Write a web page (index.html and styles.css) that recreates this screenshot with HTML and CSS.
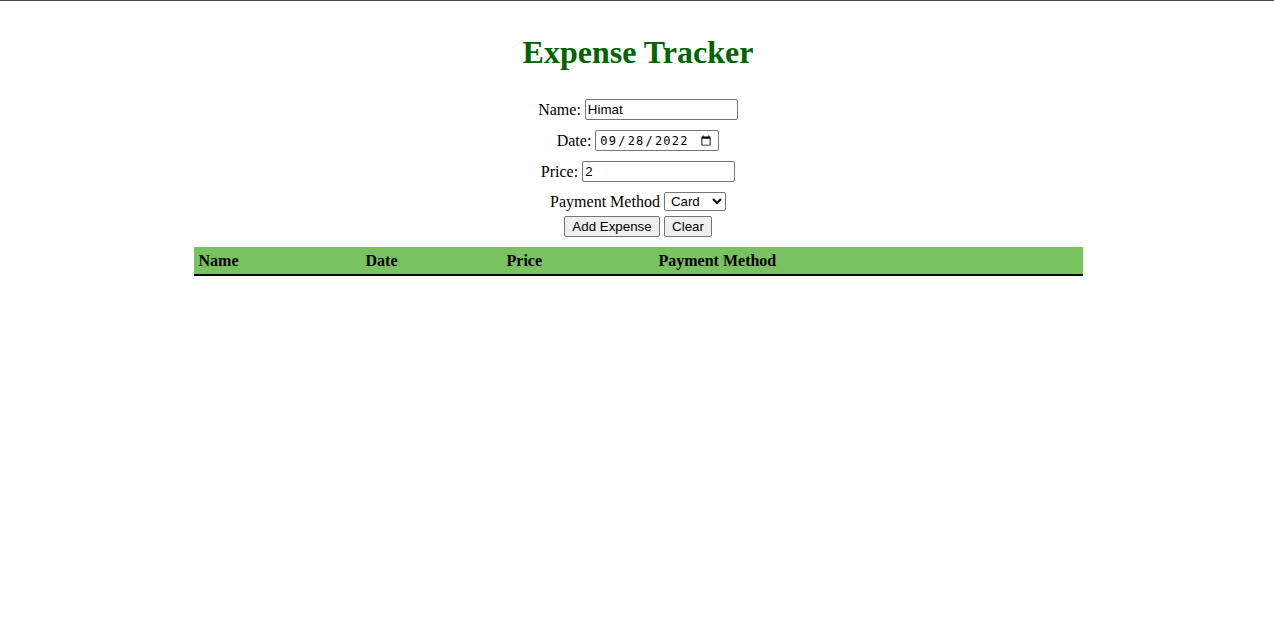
FILE: index.html
```html
<!DOCTYPE html>
<html lang="en">
<head>
<meta charset="utf-8">
<title>Expense Tracker</title>
<link rel="stylesheet" href="styles.css">
</head>
<body>
<div class="page">
  <h1 class="title">Expense Tracker</h1>
  <form class="form">
    <div class="row row-name">
      <label class="label" for="name">Name:</label>
      <input class="field field-name" id="name" type="text" value="Himat">
    </div>
    <div class="row row-date">
      <label class="label" for="date">Date:</label>
      <input class="field field-date" id="date" type="date" value="2022-09-28">
    </div>
    <div class="row row-price">
      <label class="label" for="price">Price:</label>
      <input class="field field-price" id="price" type="text" value="2">
    </div>
    <div class="row row-method">
      <label class="label" for="method">Payment Method</label>
      <select class="select" id="method">
        <option>Card</option>
        <option>Cash</option>
        <option>Other</option>
      </select>
    </div>
    <div class="row row-buttons">
      <button class="btn btn-add" type="button">Add Expense</button>
      <button class="btn btn-clear" type="button">Clear</button>
    </div>
  </form>
  <table class="table">
    <thead>
      <tr>
        <th class="col-name">Name</th>
        <th class="col-date">Date</th>
        <th class="col-price">Price</th>
        <th class="col-method">Payment Method</th>
      </tr>
    </thead>
    <tbody></tbody>
  </table>
</div>
</body>
</html>
```

FILE: styles.css
```css
html, body {
  margin: 0;
  padding: 0;
  background: #ffffff;
}

body {
  font-family: "Liberation Serif", "Times New Roman", serif;
  font-size: 16px;
  color: #000000;
}

.page {
  border-top: 1px solid #4a4a4a;
  min-height: 621px;
  padding-left: 2px;
  display: flex;
  flex-direction: column;
  align-items: center;
}

.title {
  margin: 33px 0 0 0;
  font-size: 32px;
  line-height: 37px;
  font-weight: bold;
  color: #006400;
  text-align: center;
}

.form {
  margin-top: 28px;
  display: flex;
  flex-direction: column;
  align-items: center;
}

.row {
  display: flex;
  justify-content: center;
  align-items: center;
  gap: 4px;
  height: 21px;
}

.row-date,
.row-price {
  margin-top: 10px;
}

.row-method {
  margin-top: 10px;
  height: 19px;
}

.row-buttons {
  margin-top: 5px;
}

.label {
  line-height: 18px;
}

.field {
  box-sizing: border-box;
  height: 21px;
  margin: 0;
  padding: 1px 2px;
  border: 1px solid #767676;
  border-radius: 2px;
  font-family: "Liberation Sans", Arial, sans-serif;
  font-size: 13.33px;
  color: #000000;
  background: #ffffff;
}

.field-name,
.field-price {
  width: 153px;
}

.field-date {
  width: 124px;
  font-family: "DejaVu Sans Mono", "Liberation Mono", monospace;
  font-size: 12px;
  letter-spacing: 1.2px;
  padding: 1px 4px 1px 3px;
}

.field-date::-webkit-datetime-edit-month-field,
.field-date::-webkit-datetime-edit-day-field,
.field-date::-webkit-datetime-edit-year-field {
  background: transparent;
  color: #000000;
}

.select {
  box-sizing: border-box;
  width: 62px;
  height: 19px;
  margin: 0;
  padding: 0 0 0 2px;
  border: 1px solid #767676;
  border-radius: 2px;
  font-family: "Liberation Sans", Arial, sans-serif;
  font-size: 13.33px;
  color: #000000;
  background: #ffffff;
}

.btn {
  box-sizing: border-box;
  height: 21px;
  margin: 0;
  padding: 0 6px;
  border: 1px solid #767676;
  border-radius: 2px;
  background: #efefef;
  font-family: "Liberation Sans", Arial, sans-serif;
  font-size: 13.33px;
  color: #000000;
}

.btn-add {
  width: 96px;
}

.btn-clear {
  width: 48px;
}

.table {
  margin-top: 10px;
  width: 889px;
  border-collapse: collapse;
  table-layout: fixed;
}

.table th {
  height: 27px;
  padding: 0 5px;
  text-align: left;
  vertical-align: middle;
  font-weight: bold;
  font-size: 16px;
  background: #78c25f;
  border-bottom: 2px solid #000000;
}

.col-name { width: 157px; }
.col-date { width: 131px; }
.col-price { width: 142px; }
.col-method { width: auto; }
```
